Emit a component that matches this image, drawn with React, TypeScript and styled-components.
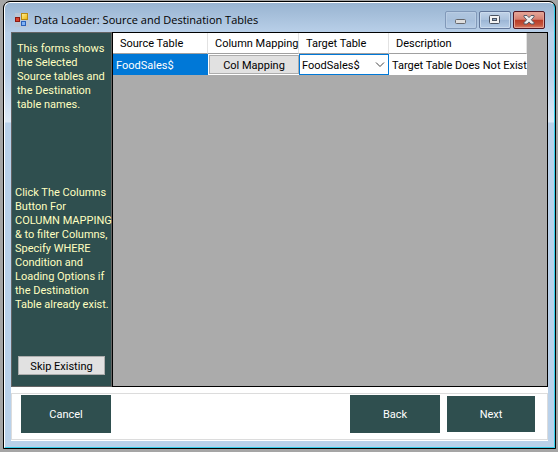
import React from "react";
import styled, { createGlobalStyle, css } from "styled-components";

const GlobalStyle = createGlobalStyle`
  * { box-sizing: border-box; }
  body {
    margin: 0;
    background: #a5a5a5;
    color: #000;
    font: 11px/14px Roboto, "Liberation Sans", Arial, sans-serif;
  }
  button, select { font: inherit; color: inherit; margin: 0; }
`;

const Desktop = styled.main`
  display: flex;
  min-height: 100vh;
  padding: 1px 2px 3px 3px;
`;

const Frame = styled.div`
  flex: 1;
  min-width: 0;
  display: flex;
  border: 1px solid #000;
  border-radius: 7px 7px 0 0;
  background: #000;
`;

const Glass = styled.div`
  flex: 1;
  min-width: 0;
  display: flex;
  flex-direction: column;
  padding: 0 6px 6px;
  border: 1px solid;
  border-color: #fff #35cdea #35cdea #fff;
  border-radius: 6px 6px 0 0;
  background:
    linear-gradient(#99b4d1, #b8cfe8 29px, transparent 29px),
    linear-gradient(#b9d1ea 29px, #b9d1ea 70px, #dde9f6 119px, #b9d1ea 120px);
`;

const TitleBar = styled.header`
  display: flex;
  align-items: center;
  height: 29px;
  padding: 5px 3px 0 4px;
`;

const Title = styled.h1`
  flex: 1;
  margin: 0 0 0 5px;
  font: 400 11px/16px "Open Sans", "Segoe UI", sans-serif;
  white-space: nowrap;
`;

const WindowButtons = styled.div`
  display: flex;
  gap: 2px;
`;

const WindowButton = styled.button<{ $tone: "faded" | "plain" | "close" }>`
  display: grid;
  place-items: center;
  width: 32px;
  height: 18px;
  padding: 0;
  border: 1px solid #62779a;
  border-radius: 2px;
  background: linear-gradient(#c1d3e8, #abc2dd 48%, #9bb5d4 50%, #b6cde7);
  box-shadow: inset 0 0 0 1px #cbdbed;
  ${(p) =>
    p.$tone === "faded" &&
    css`
      border-color: #8199b9;
      background: linear-gradient(#b0c6df, #a9c1dc 50%, #a5bedb 50%, #b5cce6);
      box-shadow: inset 0 0 0 1px #b9cde4;
    `}
  ${(p) =>
    p.$tone === "close" &&
    css`
      border-color: #501724;
      background: linear-gradient(#e5a99c, #d57f70 46%, #b83a25 50%, #c5533b 80%, #d98268);
      box-shadow: inset 0 0 0 1px #e5a092;
    `}
`;

const Client = styled.section`
  flex: 1;
  display: flex;
  flex-direction: column;
  background: #fff;
`;

const Workspace = styled.div`
  flex: 1;
  display: grid;
  grid-template-columns: 101px minmax(0, 1fr);
`;

const SidePanel = styled.aside`
  display: flex;
  flex-direction: column;
  justify-content: space-between;
  padding: 9px 0 11px 3px;
  border: 1px solid #646464;
  background: #2f4f4f;
  color: #ffffc0;
`;

const Note = styled.p<{ $inset?: boolean }>`
  margin: 0;
  padding-left: ${(p) => (p.$inset ? 2 : 0)}px;
  white-space: pre;
`;

const HelpGroup = styled.div`
  display: flex;
  flex-direction: column;
  gap: 44px;
`;

const SkipButton = styled.button`
  width: 87px;
  height: 19px;
  margin-left: 3px;
  padding: 2px 0 0;
  border: 1px solid #adadad;
  background: #e1e1e1;
  color: #000;
`;

const GridArea = styled.div`
  min-width: 0;
  border: 1px solid #000;
  background: #ababab;
`;

const Table = styled.table`
  width: 414px;
  table-layout: fixed;
  border-collapse: separate;
  border-spacing: 0;
  background: #fff;
  white-space: nowrap;
`;

const Col = styled.col<{ $width: number }>`
  width: ${(p) => p.$width}px;
`;

const HeadCell = styled.th`
  height: 21px;
  padding: 2px 0 0 7px;
  border-right: 1px solid #e2e2e2;
  border-bottom: 1px solid #a0a0a0;
  font-weight: 400;
  text-align: left;
`;

const Cell = styled.td<{ $kind?: "selected" | "control" }>`
  height: 21px;
  padding: ${(p) => (p.$kind === "control" ? "0" : "2px 0 0 3px")};
  background: ${(p) => (p.$kind === "selected" ? "#0078d7" : "#fff")};
  color: ${(p) => (p.$kind === "selected" ? "#fff" : "#000")};
`;

const MappingButton = styled.button`
  display: block;
  width: 90px;
  height: 19px;
  margin-left: 1px;
  padding: 2px 0 0;
  border: 1px solid #adadad;
  background: #e1e1e1;
`;

const Combo = styled.div`
  display: grid;
  align-items: center;
  height: 21px;
  border: 1px solid #0078d7;

  > * { grid-area: 1 / 1; }
  > svg { justify-self: end; margin-right: 3px; pointer-events: none; }
`;

const ComboSelect = styled.select`
  appearance: none;
  width: 100%;
  height: 19px;
  padding: 2px 16px 0 2px;
  border: 0;
  border-radius: 0;
  outline: 0;
  background: #fff;
`;

const Footer = styled.footer`
  display: flex;
  align-items: center;
  gap: 7px;
  height: 47px;
  margin: 6px 0 1px;
  padding: 0 12px 5px 9px;
  border: 1px solid #dcdcdc;
`;

const ActionButton = styled.button<{ $first?: boolean; $compact?: boolean }>`
  width: ${(p) => (p.$compact ? 88 : 90)}px;
  height: ${(p) => (p.$compact ? 36 : 38)}px;
  margin-right: ${(p) => (p.$first ? "auto" : "0")};
  padding: 2px 0 0;
  border: 0;
  background: #2f4f4f;
  color: #fff;
`;

const FormIcon = () => (
  <svg width="14" height="14" viewBox="0 0 14 14" aria-hidden="true">
    <defs>
      <linearGradient id="gold" x1="0" y1="0" x2="1" y2="1">
        <stop offset="0" stopColor="#fff3a0" />
        <stop offset="1" stopColor="#f0b400" />
      </linearGradient>
    </defs>
    <rect width="14" height="14" fill="#b9c6d6" />
    <rect x="6.5" y="0.5" width="6" height="6" fill="url(#gold)" stroke="#b88a10" />
    <rect x="0.5" y="4.5" width="4" height="4" fill="#d8402c" stroke="#8c1b12" />
    <rect x="6.5" y="8.5" width="4" height="4" fill="#7fb2f5" stroke="#2b62bb" />
  </svg>
);

const MinimizeIcon = () => (
  <svg width="12" height="10" viewBox="0 0 12 10" aria-hidden="true">
    <rect x="0.5" y="4.5" width="10" height="4" rx="1" fill="#dedede" stroke="#66686c" />
  </svg>
);

const MaximizeIcon = () => (
  <svg width="12" height="10" viewBox="0 0 12 10" aria-hidden="true">
    <rect x="0.5" y="0.5" width="10" height="8" rx="1" fill="#f3f3f3" stroke="#4a5361" />
    <rect x="3.5" y="3.5" width="4" height="2" fill="#8fa9c8" stroke="#4a5361" />
  </svg>
);

const CloseIcon = () => (
  <svg width="12" height="10" viewBox="0 0 12 10" aria-hidden="true">
    <path
      d="M1 .5h3L6 2.6 8 .5h3v1.3L8.3 4.7 11 7.6V9H8L6 6.9 4 9H1V7.6l2.7-2.9L1 1.8z"
      fill="#f0f0f0"
      stroke="#555a66"
    />
  </svg>
);

const Chevron = () => (
  <svg width="10" height="7" viewBox="0 0 10 7" aria-hidden="true">
    <path d="M1 1.5l4 4 4-4" fill="none" stroke="#444" />
  </svg>
);

const INTRO = "This forms shows\nthe Selected\nSource tables and\nthe Destination\ntable names.";
const HELP =
  "Click The Columns\nButton For\nCOLUMN MAPPING\n& to filter Columns,\nSpecify WHERE\nCondition and\nLoading Options if\nthe Destination\nTable already exist.";

const COLUMNS = [
  { name: "Source Table", width: 95 },
  { name: "Column Mapping", width: 91 },
  { name: "Target Table", width: 90 },
  { name: "Description", width: 138 },
];

export default function App() {
  return (
    <Desktop>
      <GlobalStyle />
      <Frame>
        <Glass>
          <TitleBar>
            <FormIcon />
            <Title>Data Loader: Source and Destination Tables</Title>
            <WindowButtons>
              <WindowButton type="button" $tone="faded" aria-label="Minimize">
                <MinimizeIcon />
              </WindowButton>
              <WindowButton type="button" $tone="plain" aria-label="Maximize">
                <MaximizeIcon />
              </WindowButton>
              <WindowButton type="button" $tone="close" aria-label="Close">
                <CloseIcon />
              </WindowButton>
            </WindowButtons>
          </TitleBar>
          <Client>
            <Workspace>
              <SidePanel>
                <Note $inset>{INTRO}</Note>
                <HelpGroup>
                  <Note>{HELP}</Note>
                  <SkipButton type="button">Skip Existing</SkipButton>
                </HelpGroup>
              </SidePanel>
              <GridArea>
                <Table>
                  <colgroup>
                    {COLUMNS.map((c) => (
                      <Col key={c.name} $width={c.width} />
                    ))}
                  </colgroup>
                  <thead>
                    <tr>
                      {COLUMNS.map((c) => (
                        <HeadCell key={c.name} scope="col">{c.name}</HeadCell>
                      ))}
                    </tr>
                  </thead>
                  <tbody>
                    <tr>
                      <Cell $kind="selected">FoodSales$</Cell>
                      <Cell $kind="control">
                        <MappingButton type="button">Col Mapping</MappingButton>
                      </Cell>
                      <Cell $kind="control">
                        <Combo>
                          <ComboSelect aria-label="Target Table" defaultValue="FoodSales$">
                            <option>FoodSales$</option>
                          </ComboSelect>
                          <Chevron />
                        </Combo>
                      </Cell>
                      <Cell>Target Table Does Not Exist</Cell>
                    </tr>
                  </tbody>
                </Table>
              </GridArea>
            </Workspace>
            <Footer>
              <ActionButton type="button" $first>Cancel</ActionButton>
              <ActionButton type="button">Back</ActionButton>
              <ActionButton type="button" $compact>Next</ActionButton>
            </Footer>
          </Client>
        </Glass>
      </Frame>
    </Desktop>
  );
}
